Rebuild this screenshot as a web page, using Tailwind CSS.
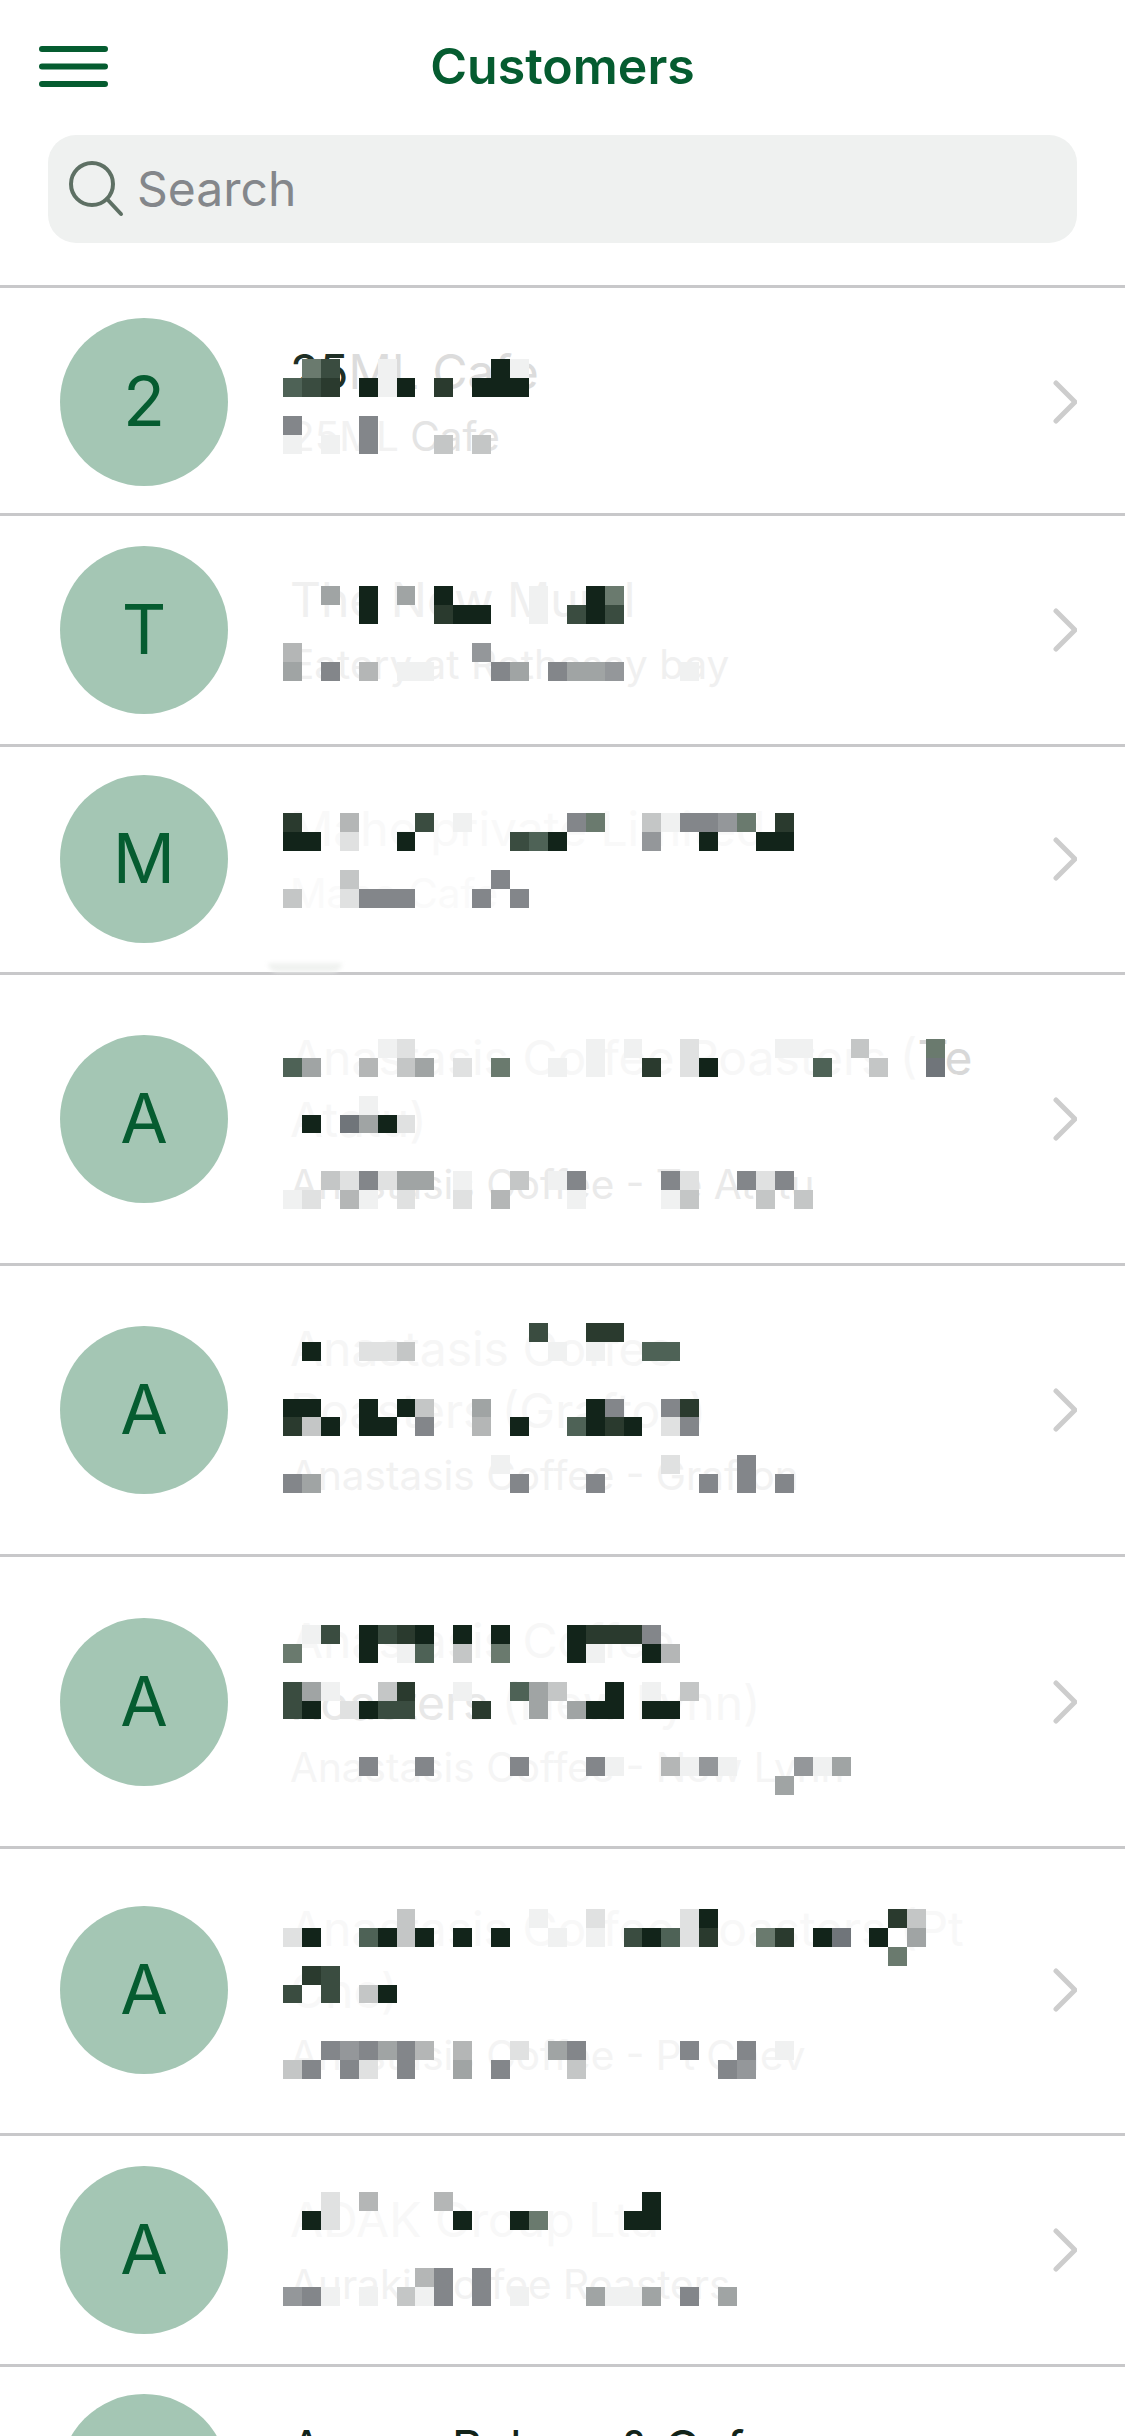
<!DOCTYPE html>
<html lang="en">
<head>
    <meta charset="UTF-8">
    <meta name="viewport" content="width=device-width, initial-scale=1.0">
    <title>Customers</title>
    <script src="https://cdn.jsdelivr.net/npm/@tailwindcss/browser@4"></script>
</head>
<body class="bg-white font-['Inter',sans-serif] h-[2436px] overflow-hidden">

    <!-- Header -->
    <header class="relative h-[288px] border-b-[3px] border-[#c8c8ca]">
        <div class="h-[135px] flex items-center justify-between px-[39px] pb-[2px]">
            <svg class="w-[69px] h-[42px]" viewBox="0 0 69 42" fill="none" stroke="#055c30" stroke-width="6" stroke-linecap="round">
                <path d="M3 3h63M3 20.500h63M3 38h63" />
            </svg>
            <h1 class="absolute left-0 right-0 -mt-[2px] text-center text-[#055c30] text-[50px] leading-[60px] font-semibold">Customers</h1>
        </div>
        <div class="mx-[48px] w-[1029px] h-[108px] bg-[#eff1f0] rounded-[28px] flex items-center pl-[21px] gap-[12px]">
            <svg class="w-[56px] h-[56px] shrink-0" viewBox="0 0 56 56" fill="none" stroke="#5e7064" stroke-width="4" stroke-linecap="round">
                <circle cx="23" cy="23" r="21" />
                <path d="M38 38l14 15" />
            </svg>
            <span class="text-[#84878b] text-[48px] leading-[60px]">Search</span>
        </div>
    </header>

    <main>
        <!-- Customer rows, the pixel blocks over the names are one svg per row (1 unit = one block) -->
        <div class="relative h-[228px] border-b-[3px] border-[#c8c8ca] flex items-center pl-[60px] pr-[48px] pt-[2px]">
            <div class="w-[168px] h-[168px] rounded-full bg-[#a4c6b4] flex items-center justify-center text-[#055c30] text-[69px] shrink-0">2</div>
            <div class="flex-1 ml-[62px] pt-[8px]">
                <p class="text-[48px] leading-[62px] text-[#dcdcdc]"><span class="text-[#1f2f25]">25</span>ML Cafe</p>
                <p class="text-[40.500px] leading-[68px] text-[#e4e4e4]"><span class="text-[#f2f2f2]">25ML</span> Cafe</p>
            </div>
            <svg class="w-[28px] h-[44px] shrink-0" viewBox="0 0 28 44" fill="none" stroke="#cdcdcd" stroke-width="5" stroke-linecap="round" stroke-linejoin="round"><path d="M7 3l19 19L7 41" /></svg>
            <svg class="absolute left-[283px] top-[71px] w-[681px] h-[95px]" viewBox="0 0 36 5" preserveAspectRatio="none" fill="none" stroke-width="1" shape-rendering="crispEdges">
                <path stroke="#12241a" d="M11 .5h1M4 1.500h1M6 1.500h1M10 1.500h3" />
                <path stroke="#2a3a2e" d="M2 1.500h1M8 1.500h1" />
                <path stroke="#3a4c40" d="M2 .5h1M1 1.500h1" />
                <path stroke="#4e6256" d="M0 1.500h1" />
                <path stroke="#6a7a6e" d="M1 .5h1" />
                <path stroke="#83868a" d="M0 3.500h1M4 3.500h1M4 4.500h1" />
                <path stroke="#c4c6c6" d="M8 4.500h1M10 4.500h1" />
                <path stroke="#f0f1f1" d="M5 .5h1M12 .5h1M5 1.500h1M0 4.500h1M2 4.500h1" />
            </svg>
        </div>

        <div class="relative h-[231px] border-b-[3px] border-[#c8c8ca] flex items-center pl-[60px] pr-[48px]">
            <div class="w-[168px] h-[168px] rounded-full bg-[#a4c6b4] flex items-center justify-center text-[#055c30] text-[69px] shrink-0">T</div>
            <div class="flex-1 ml-[62px] pt-[8px]">
                <p class="text-[48px] leading-[62px] text-[#f0f0f0]">The New Mural</p>
                <p class="text-[40.500px] leading-[68px] text-[#f0f0f0]">Eatery at Rothesay bay</p>
            </div>
            <svg class="w-[28px] h-[44px] shrink-0" viewBox="0 0 28 44" fill="none" stroke="#cdcdcd" stroke-width="5" stroke-linecap="round" stroke-linejoin="round"><path d="M7 3l19 19L7 41" /></svg>
            <svg class="absolute left-[283px] top-[70px] w-[681px] h-[95px]" viewBox="0 0 36 5" preserveAspectRatio="none" fill="none" stroke-width="1" shape-rendering="crispEdges">
                <path stroke="#12241a" d="M4 .5h1M8 .5h1M16 .5h1M4 1.500h1M9 1.500h2M16 1.500h1" />
                <path stroke="#2a3a2e" d="M8 1.500h1" />
                <path stroke="#3a4c40" d="M15 1.500h1M17 1.500h1" />
                <path stroke="#6a7a6e" d="M17 .5h1" />
                <path stroke="#83868a" d="M2 4.500h1M11 4.500h1M14 4.500h1" />
                <path stroke="#94979a" d="M10 3.500h1M17 4.500h1" />
                <path stroke="#a0a4a4" d="M2 .5h1M6 .5h1M0 4.500h1M12 4.500h1M15 4.500h2" />
                <path stroke="#b4b6b6" d="M0 3.500h1M4 4.500h1" />
                <path stroke="#f0f1f1" d="M13 .5h1M13 1.500h1M6 4.500h2M21 4.500h1" />
            </svg>
        </div>

        <div class="relative h-[228px] border-b-[3px] border-[#c8c8ca] flex items-center pl-[60px] pr-[48px] pb-[2px]">
            <div class="w-[168px] h-[168px] rounded-full bg-[#a4c6b4] flex items-center justify-center text-[#055c30] text-[69px] shrink-0">M</div>
            <div class="flex-1 ml-[62px] pt-[8px]">
                <p class="text-[48px] leading-[62px] text-[#f9f9f9]">Mahe private Limited</p>
                <p class="text-[40.500px] leading-[68px] text-[#fafafa]">Mahe Cafe</p>
            </div>
            <svg class="w-[28px] h-[44px] shrink-0" viewBox="0 0 28 44" fill="none" stroke="#cdcdcd" stroke-width="5" stroke-linecap="round" stroke-linejoin="round"><path d="M7 3l19 19L7 41" /></svg>
            <svg class="absolute left-[283px] top-[66px] w-[681px] h-[95px]" viewBox="0 0 36 5" preserveAspectRatio="none" fill="none" stroke-width="1" shape-rendering="crispEdges">
                <path stroke="#12241a" d="M0 1.500h2M6 1.500h1M14 1.500h1M22 1.500h1M25 1.500h2" />
                <path stroke="#2a3a2e" d="M0 .5h1M26 .5h1" />
                <path stroke="#3a4c40" d="M7 .5h1M12 1.500h1" />
                <path stroke="#4e6256" d="M13 1.500h1" />
                <path stroke="#6a7a6e" d="M16 .5h1M24 .5h1" />
                <path stroke="#83868a" d="M15 .5h1M21 .5h2M11 3.500h1M4 4.500h3M10 4.500h1M12 4.500h1" />
                <path stroke="#94979a" d="M23 .5h1M19 1.500h1" />
                <path stroke="#b4b6b6" d="M3 .5h1" />
                <path stroke="#c4c6c6" d="M19 .5h1M3 3.500h1M0 4.500h1" />
                <path stroke="#e0e1e1" d="M3 1.500h1M3 4.500h1" />
                <path stroke="#f0f1f1" d="M9 .5h1M20 .5h1" />
            </svg>
            <div class="absolute left-[268px] bottom-0 w-[74px] h-[9px] rounded-b-full bg-[#f0f2f0] blur-[2px]"></div>
        </div>

        <div class="relative h-[291px] border-b-[3px] border-[#c8c8ca] flex items-center pl-[60px] pr-[48px]">
            <div class="w-[168px] h-[168px] rounded-full bg-[#a4c6b4] flex items-center justify-center text-[#055c30] text-[69px] shrink-0">A</div>
            <div class="flex-1 ml-[62px] pt-[8px]">
                <p class="w-[700px] text-[48px] leading-[62px] text-[#f7f7f7]">Anastasis Coffee Roasters (<span class="text-[#d8d8d8]">Te</span> Atatu)</p>
                <p class="text-[40.500px] leading-[68px] text-[#eaeaea]">Anastasis Coffee - Te Atatu</p>
            </div>
            <svg class="w-[28px] h-[44px] shrink-0" viewBox="0 0 28 44" fill="none" stroke="#cdcdcd" stroke-width="5" stroke-linecap="round" stroke-linejoin="round"><path d="M7 3l19 19L7 41" /></svg>
            <svg class="absolute left-[283px] top-[64px] w-[681px] h-[170px]" viewBox="0 0 36 9" preserveAspectRatio="none" fill="none" stroke-width="1" shape-rendering="crispEdges">
                <path stroke="#12241a" d="M22 1.500h1M1 4.500h1M5 4.500h1" />
                <path stroke="#2a3a2e" d="M19 1.500h1" />
                <path stroke="#4e6256" d="M0 1.500h1M28 1.500h1" />
                <path stroke="#6a7a6e" d="M34 .5h1M11 1.500h1" />
                <path stroke="#70757a" d="M34 1.500h1M3 4.500h1" />
                <path stroke="#83868a" d="M4 7.500h1M15 7.500h1M20 7.500h1M24 7.500h1M26 7.500h1" />
                <path stroke="#a0a4a4" d="M1 1.500h1M7 1.500h1M4 4.500h1M6 7.500h2" />
                <path stroke="#b4b6b6" d="M4 1.500h1M3 8.500h1M11 8.500h1" />
                <path stroke="#c4c6c6" d="M30 .5h1M6 1.500h1M31 1.500h1M2 7.500h1M12 7.500h1M21 8.500h1M25 8.500h1M27 8.500h1" />
                <path stroke="#e0e1e1" d="M6 .5h1M21 .5h1M9 1.500h1M21 1.500h1M6 4.500h1M3 7.500h1M5 7.500h1M21 7.500h1M25 7.500h1M1 8.500h1M6 8.500h1M9 8.500h1" />
                <path stroke="#f0f1f1" d="M5 .5h1M16 .5h1M18 .5h1M26 .5h2M14 1.500h1M16 1.500h1M4 3.500h1M9 7.500h1M14 7.500h1M0 8.500h1M4 8.500h1M15 8.500h1M20 8.500h1" />
            </svg>
        </div>

        <div class="relative h-[291px] border-b-[3px] border-[#c8c8ca] flex items-center pl-[60px] pr-[48px]">
            <div class="w-[168px] h-[168px] rounded-full bg-[#a4c6b4] flex items-center justify-center text-[#055c30] text-[69px] shrink-0">A</div>
            <div class="flex-1 ml-[62px] pt-[8px]">
                <p class="w-[500px] text-[48px] leading-[62px] text-[#f6f6f6]">Anastasis Coffee Roasters (Grafton)</p>
                <p class="text-[40.500px] leading-[68px] text-[#f2f2f2]">Anastasis Coffee - Grafton</p>
            </div>
            <svg class="w-[28px] h-[44px] shrink-0" viewBox="0 0 28 44" fill="none" stroke="#cdcdcd" stroke-width="5" stroke-linecap="round" stroke-linejoin="round"><path d="M7 3l19 19L7 41" /></svg>
            <svg class="absolute left-[283px] top-[57px] w-[681px] h-[170px]" viewBox="0 0 36 9" preserveAspectRatio="none" fill="none" stroke-width="1" shape-rendering="crispEdges">
                <path stroke="#12241a" d="M1 1.500h1M0 4.500h2M4 4.500h1M6 4.500h1M16 4.500h1M2 5.500h1M4 5.500h2M12 5.500h1M16 5.500h1M18 5.500h1" />
                <path stroke="#2a3a2e" d="M16 .5h2M21 4.500h1M0 5.500h1M17 5.500h1" />
                <path stroke="#3a4c40" d="M13 .5h1" />
                <path stroke="#4e6256" d="M19 1.500h2M15 5.500h1" />
                <path stroke="#83868a" d="M17 4.500h1M20 4.500h1M7 5.500h1M21 5.500h1M24 7.500h1M0 8.500h1M12 8.500h1M16 8.500h1M22 8.500h1M24 8.500h1M26 8.500h1" />
                <path stroke="#a0a4a4" d="M10 4.500h1M1 8.500h1" />
                <path stroke="#b4b6b6" d="M10 5.500h1" />
                <path stroke="#c4c6c6" d="M6 1.500h1M7 4.500h1M1 5.500h1" />
                <path stroke="#e0e1e1" d="M4 1.500h2M20 5.500h1M20 7.500h1" />
                <path stroke="#f0f1f1" d="M14 1.500h1M16 1.500h1M11 7.500h1" />
            </svg>
        </div>

        <div class="relative h-[292px] border-b-[3px] border-[#c8c8ca] flex items-center pl-[60px] pr-[48px]">
            <div class="w-[168px] h-[168px] rounded-full bg-[#a4c6b4] flex items-center justify-center text-[#055c30] text-[69px] shrink-0">A</div>
            <div class="flex-1 ml-[62px] pt-[8px]">
                <p class="w-[500px] text-[48px] leading-[62px] text-[#f7f7f7]">Anastasis Coffee <span class="text-[#e8e8e8]">Roasters</span> (New Lynn)</p>
                <p class="text-[40.500px] leading-[68px] text-[#f5f5f5]">Anastasis Coffee - New Lynn</p>
            </div>
            <svg class="w-[28px] h-[44px] shrink-0" viewBox="0 0 28 44" fill="none" stroke="#cdcdcd" stroke-width="5" stroke-linecap="round" stroke-linejoin="round"><path d="M7 3l19 19L7 41" /></svg>
            <svg class="absolute left-[283px] top-[68px] w-[681px] h-[170px]" viewBox="0 0 36 9" preserveAspectRatio="none" fill="none" stroke-width="1" shape-rendering="crispEdges">
                <path stroke="#12241a" d="M4 .5h1M7 .5h1M9 .5h1M11 .5h1M15 .5h1M4 1.500h1M15 1.500h1M19 1.500h1M17 3.500h1M1 4.500h1M4 4.500h1M16 4.500h2M19 4.500h2" />
                <path stroke="#2a3a2e" d="M6 .5h1M16 .5h3M6 3.500h1M10 4.500h1" />
                <path stroke="#3a4c40" d="M2 .5h1M5 .5h1M0 3.500h1M0 4.500h1M5 4.500h2" />
                <path stroke="#4e6256" d="M7 1.500h1M12 3.500h1" />
                <path stroke="#6a7a6e" d="M0 1.500h1M11 1.500h1" />
                <path stroke="#83868a" d="M19 .5h1M4 7.500h1M7 7.500h1M12 7.500h1M16 7.500h1" />
                <path stroke="#94979a" d="M22 7.500h1M27 7.500h1" />
                <path stroke="#a0a4a4" d="M1 3.500h1M13 3.500h1M13 4.500h1M15 4.500h1M29 7.500h1M26 8.500h1" />
                <path stroke="#b4b6b6" d="M20 1.500h1M20 7.500h1" />
                <path stroke="#c4c6c6" d="M9 1.500h1M5 3.500h1M14 3.500h1M21 3.500h1" />
                <path stroke="#e0e1e1" d="M3 4.500h1" />
                <path stroke="#f0f1f1" d="M1 .5h1M6 1.500h1M16 1.500h1M2 3.500h1M9 3.500h1M19 3.500h1M17 7.500h1M21 7.500h1M23 7.500h1M28 7.500h1" />
            </svg>
        </div>

        <div class="relative h-[287px] border-b-[3px] border-[#c8c8ca] flex items-center pl-[60px] pr-[48px] pb-[2px]">
            <div class="w-[168px] h-[168px] rounded-full bg-[#a4c6b4] flex items-center justify-center text-[#055c30] text-[69px] shrink-0">A</div>
            <div class="flex-1 ml-[62px] pt-[8px]">
                <p class="w-[720px] text-[48px] leading-[62px] text-[#f8f8f8]">Anastasis Coffee Roasters (Pt Che)</p>
                <p class="text-[40.500px] leading-[68px] text-[#f4f4f4]">Anastasis Coffee - Pt Chev</p>
            </div>
            <svg class="w-[28px] h-[44px] shrink-0" viewBox="0 0 28 44" fill="none" stroke="#cdcdcd" stroke-width="5" stroke-linecap="round" stroke-linejoin="round"><path d="M7 3l19 19L7 41" /></svg>
            <svg class="absolute left-[283px] top-[60px] w-[681px] h-[170px]" viewBox="0 0 36 9" preserveAspectRatio="none" fill="none" stroke-width="1" shape-rendering="crispEdges">
                <path stroke="#12241a" d="M22 .5h1M1 1.500h1M5 1.500h1M7 1.500h1M9 1.500h1M11 1.500h1M19 1.500h1M28 1.500h1M31 1.500h1M5 4.500h1" />
                <path stroke="#2a3a2e" d="M32 .5h1M22 1.500h1M26 1.500h1M1 3.500h1" />
                <path stroke="#3a4c40" d="M18 1.500h1M2 3.500h1M0 4.500h1M2 4.500h1" />
                <path stroke="#4e6256" d="M4 1.500h1M20 1.500h1" />
                <path stroke="#6a7a6e" d="M25 1.500h1M32 2.500h1" />
                <path stroke="#70757a" d="M29 1.500h1" />
                <path stroke="#83868a" d="M2 7.500h1M4 7.500h1M6 7.500h1M15 7.500h1M21 7.500h1M24 7.500h1M1 8.500h1M3 8.500h1M6 8.500h1M11 8.500h1M23 8.500h1" />
                <path stroke="#94979a" d="M3 7.500h1M24 8.500h1" />
                <path stroke="#a0a4a4" d="M33 1.500h1M5 7.500h1M14 7.500h1M9 8.500h1" />
                <path stroke="#b4b6b6" d="M7 7.500h1M9 7.500h1" />
                <path stroke="#c4c6c6" d="M6 .5h1M33 .5h1M6 1.500h1M4 4.500h1M0 8.500h1M15 8.500h1" />
                <path stroke="#e0e1e1" d="M16 .5h1M21 .5h1M0 1.500h1M21 1.500h1M12 7.500h1M4 8.500h1" />
                <path stroke="#f0f1f1" d="M13 .5h1M14 1.500h1M16 1.500h1M26 7.500h1" />
            </svg>
        </div>

        <div class="relative h-[231px] border-b-[3px] border-[#c8c8ca] flex items-center pl-[60px] pr-[48px]">
            <div class="w-[168px] h-[168px] rounded-full bg-[#a4c6b4] flex items-center justify-center text-[#055c30] text-[69px] shrink-0">A</div>
            <div class="flex-1 ml-[62px] pt-[8px]">
                <p class="text-[48px] leading-[62px] text-[#f8f8f8]">ADAK Group Ltd</p>
                <p class="text-[40.500px] leading-[68px] text-[#f2f2f2]">Auraki Coffee Roasters</p>
            </div>
            <svg class="w-[28px] h-[44px] shrink-0" viewBox="0 0 28 44" fill="none" stroke="#cdcdcd" stroke-width="5" stroke-linecap="round" stroke-linejoin="round"><path d="M7 3l19 19L7 41" /></svg>
            <svg class="absolute left-[283px] top-[56px] w-[681px] h-[114px]" viewBox="0 0 36 6" preserveAspectRatio="none" fill="none" stroke-width="1" shape-rendering="crispEdges">
                <path stroke="#12241a" d="M19 .5h1M1 1.500h1M9 1.500h1M12 1.500h1M18 1.500h2" />
                <path stroke="#6a7a6e" d="M13 1.500h1" />
                <path stroke="#83868a" d="M8 4.500h1M10 4.500h1M1 5.500h1M8 5.500h1M10 5.500h1M21 5.500h1" />
                <path stroke="#94979a" d="M0 5.500h1" />
                <path stroke="#a0a4a4" d="M16 5.500h1M19 5.500h1M23 5.500h1" />
                <path stroke="#b4b6b6" d="M4 .5h1M8 .5h1M7 4.500h1" />
                <path stroke="#c4c6c6" d="M6 5.500h1" />
                <path stroke="#e0e1e1" d="M2 .5h1M2 1.500h1" />
                <path stroke="#f0f1f1" d="M2 5.500h1M4 5.500h1M7 5.500h1M12 5.500h1M17 5.500h2" />
            </svg>
        </div>

        <div class="relative h-[222px] flex items-center pl-[60px] pr-[48px]">
            <div class="w-[168px] h-[168px] rounded-full bg-[#a4c6b4] flex items-center justify-center text-[#055c30] text-[69px] shrink-0">A</div>
            <div class="flex-1 ml-[62px] pt-[8px]">
                <p class="text-[48px] leading-[62px] text-[#12241a]">Aroma Bakers &amp; Cafe</p>
                <p class="text-[40.500px] leading-[68px] text-[#84878b]">Aroma Bakers</p>
            </div>
        </div>
    </main>
</body>
</html>
